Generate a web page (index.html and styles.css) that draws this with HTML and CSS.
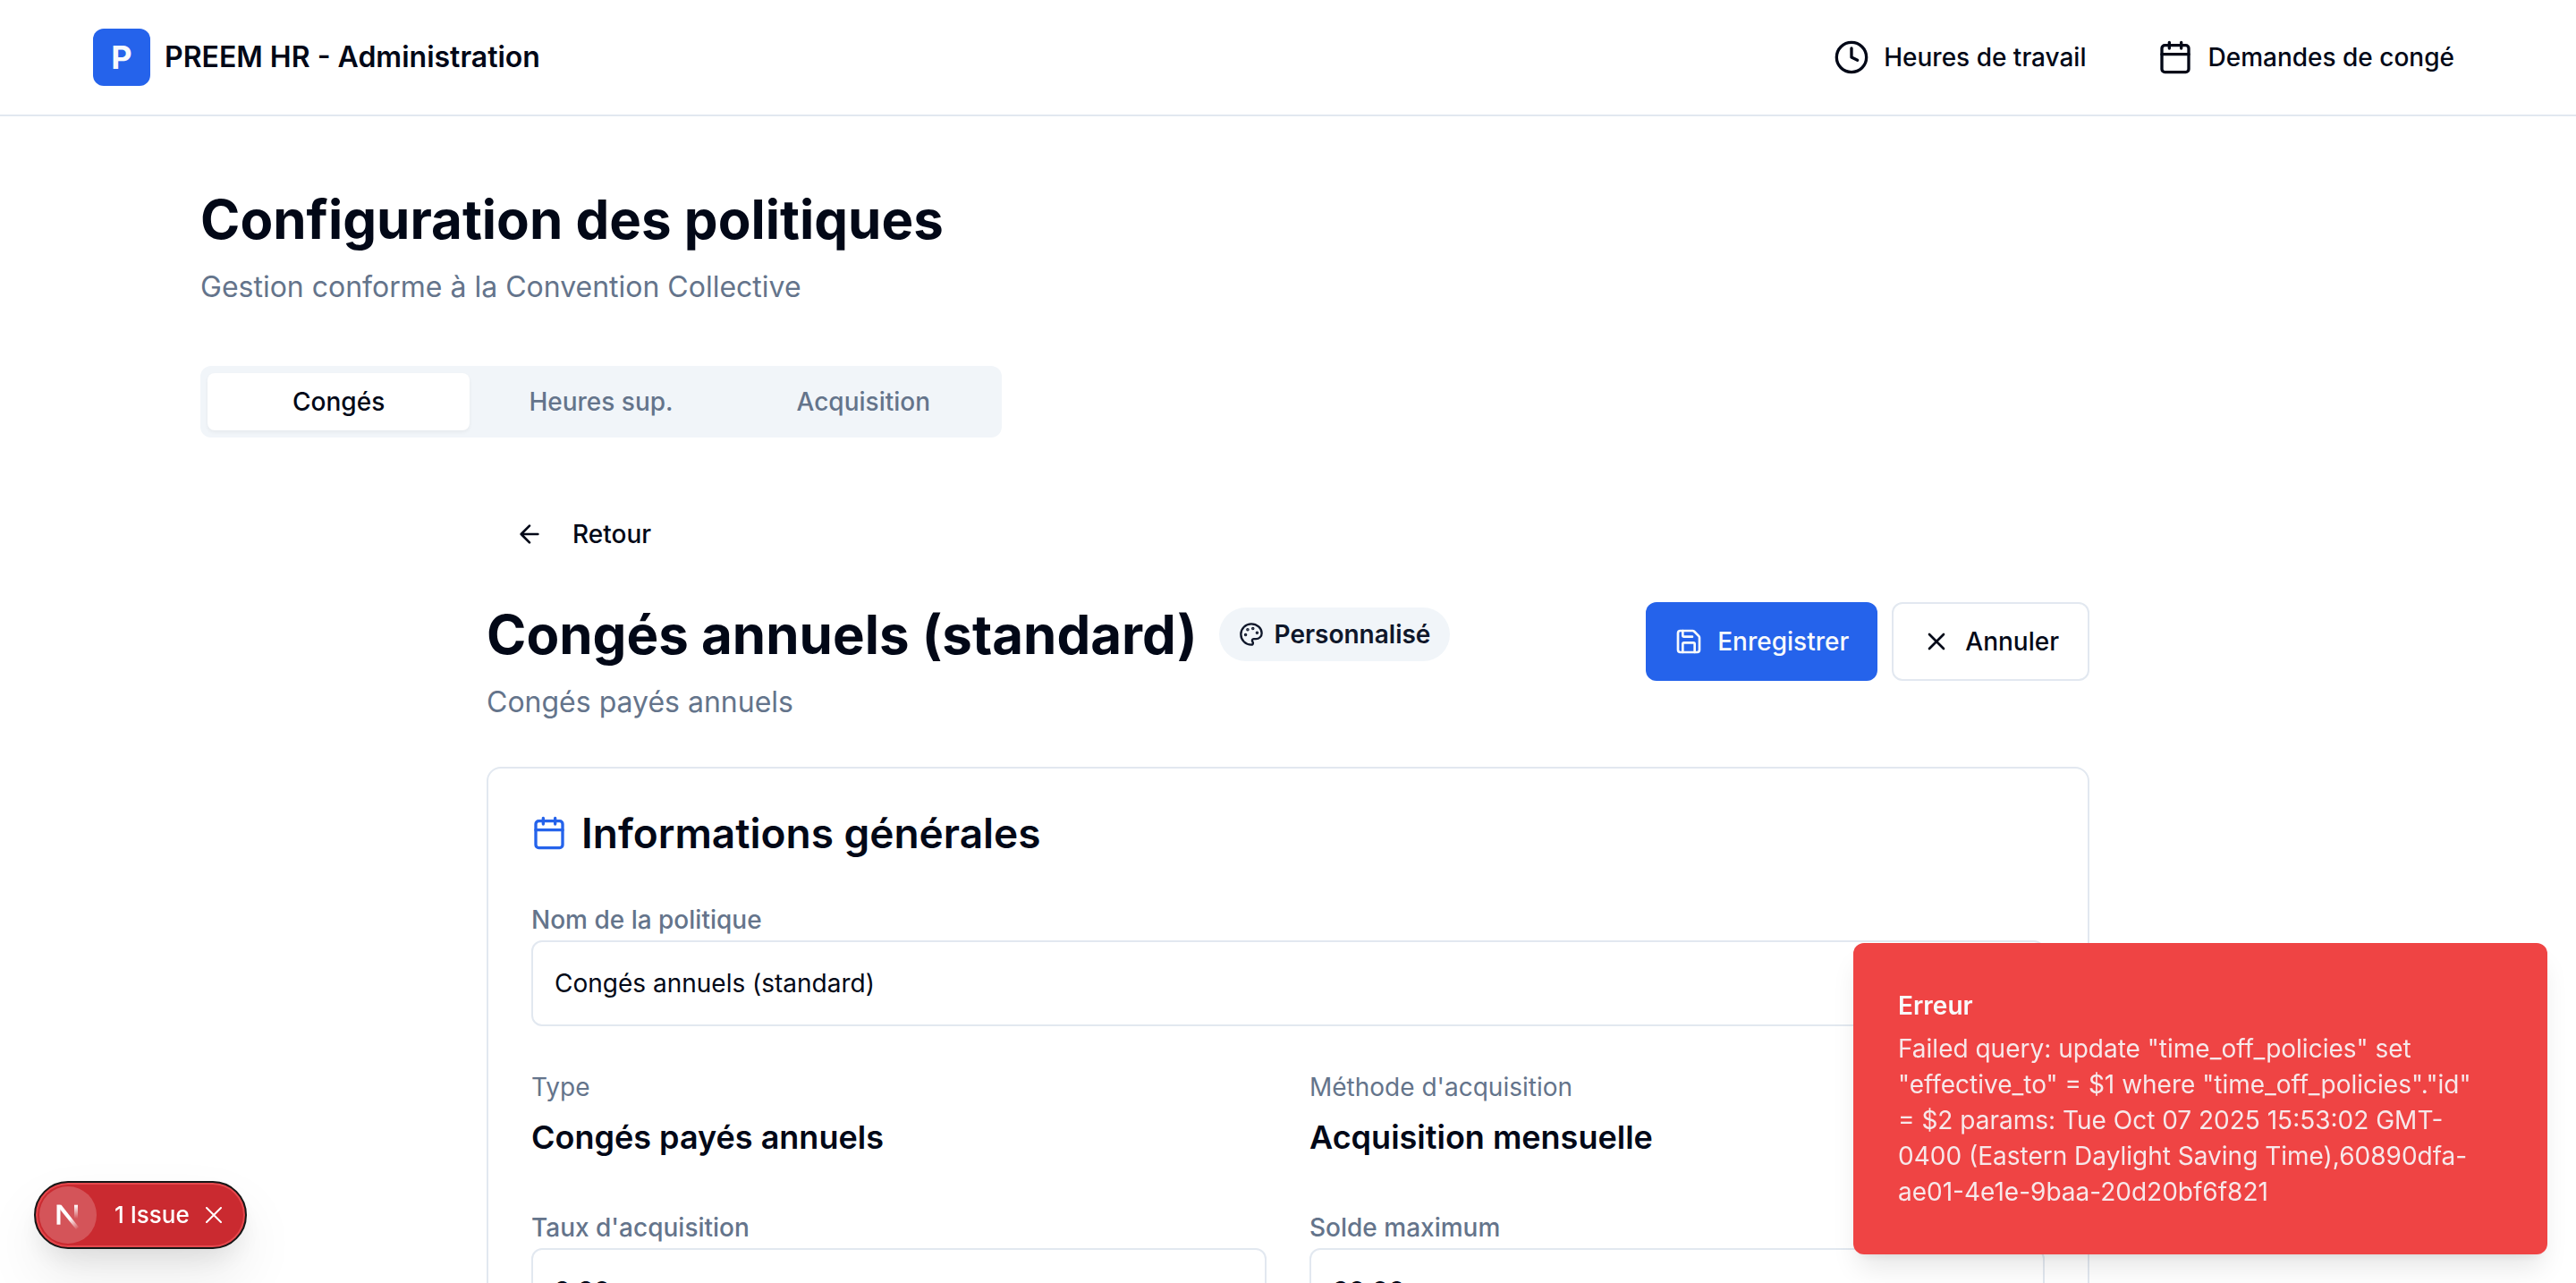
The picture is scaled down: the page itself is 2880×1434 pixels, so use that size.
FILE: index.html
```html
<!DOCTYPE html>
<html lang="fr">
<head>
<meta charset="utf-8">
<title>PREEM HR - Administration</title>
<link rel="stylesheet" href="styles.css">
</head>
<body>
<header class="topbar">
  <a class="brand" href="#"><span class="brand-mark">P</span><span class="brand-name">PREEM HR - Administration</span></a>
  <nav class="topnav">
    <a class="nav-link" href="#">
      <svg class="icon icon-lg" viewBox="0 0 24 24"><circle cx="12" cy="12" r="10"/><path d="M12 6v6l4 2"/></svg>
      Heures de travail
    </a>
    <a class="nav-link" href="#">
      <svg class="icon icon-lg" viewBox="0 0 24 24"><path d="M8 2v4M16 2v4"/><rect width="18" height="18" x="3" y="4" rx="2"/><path d="M3 10h18"/></svg>
      Demandes de congé
    </a>
  </nav>
</header>

<main class="page">
  <div class="heading">
    <h1 class="title">Configuration des politiques</h1>
    <p class="subtitle">Gestion conforme à la Convention Collective</p>
  </div>

  <div class="tabs" role="tablist">
    <button class="tab tab-active" role="tab" aria-selected="true">Congés</button>
    <button class="tab" role="tab" aria-selected="false">Heures sup.</button>
    <button class="tab" role="tab" aria-selected="false">Acquisition</button>
  </div>

  <section class="policy">
    <button class="btn btn-back">
      <svg class="icon" viewBox="0 0 24 24"><path d="m12 19-7-7 7-7M19 12H5"/></svg>
      Retour
    </button>

    <div class="policy-head">
      <div class="heading">
        <div class="title-row">
          <h2 class="title">Congés annuels (standard)</h2>
          <span class="badge">
            <svg class="icon icon-sm" viewBox="0 0 24 24"><path d="M12 2C6.500 2 2 6.500 2 12s4.500 10 10 10c.926 0 1.648-.746 1.648-1.688 0-.437-.18-.835-.437-1.125-.29-.289-.438-.652-.438-1.125a1.640 1.640 0 0 1 1.668-1.668h1.996c3.051 0 5.555-2.503 5.555-5.554C21.965 6.012 17.461 2 12 2z"/><circle class="dot" cx="13.500" cy="6.500" r=".5"/><circle class="dot" cx="17.500" cy="10.500" r=".5"/><circle class="dot" cx="8.500" cy="7.500" r=".5"/><circle class="dot" cx="6.500" cy="12.500" r=".5"/></svg>
            Personnalisé
          </span>
        </div>
        <p class="subtitle">Congés payés annuels</p>
      </div>
      <div class="actions">
        <button class="btn btn-primary">
          <svg class="icon" viewBox="0 0 24 24"><path d="M15.200 3a2 2 0 0 1 1.400.6l3.800 3.800a2 2 0 0 1 .6 1.400V19a2 2 0 0 1-2 2H5a2 2 0 0 1-2-2V5a2 2 0 0 1 2-2z"/><path d="M17 21v-7a1 1 0 0 0-1-1H8a1 1 0 0 0-1 1v7M7 3v4a1 1 0 0 0 1 1h7"/></svg>
          Enregistrer
        </button>
        <button class="btn btn-outline">
          <svg class="icon" viewBox="0 0 24 24"><path d="M18 6 6 18M6 6l12 12"/></svg>
          Annuler
        </button>
      </div>
    </div>

    <div class="card">
      <h3 class="card-title">
        <svg class="icon icon-lg icon-accent" viewBox="0 0 24 24"><path d="M8 2v4M16 2v4"/><rect width="18" height="18" x="3" y="4" rx="2"/><path d="M3 10h18"/></svg>
        Informations générales
      </h3>
      <form class="fields">
        <div class="field field-wide">
          <label class="label" for="policy-name">Nom de la politique</label>
          <input class="input" id="policy-name" type="text" value="Congés annuels (standard)">
        </div>
        <div class="fact">
          <p class="fact-name">Type</p>
          <p class="fact-value">Congés payés annuels</p>
        </div>
        <div class="fact">
          <p class="fact-name">Méthode d'acquisition</p>
          <p class="fact-value">Acquisition mensuelle</p>
        </div>
        <div class="field">
          <label class="label" for="accrual-rate">Taux d'acquisition</label>
          <input class="input input-strong" id="accrual-rate" type="text" value="2.20">
        </div>
        <div class="field">
          <label class="label" for="max-balance">Solde maximum</label>
          <input class="input input-strong" id="max-balance" type="text" value="30.00">
        </div>
      </form>
    </div>
  </section>
</main>

<div class="toast" role="alert">
  <p class="toast-title">Erreur</p>
  <p class="toast-text">Failed query: update "time_off_policies" set "effective_to" = $1 where "time_off_policies"."id" = $2 params: Tue Oct 07 2025 15:53:02 GMT-0400 (Eastern Daylight Saving Time),60890dfa-ae01-4e1e-9baa-20d20bf6f821</p>
</div>

<div class="issues">
  <button class="issues-logo" aria-label="Next.js">
    <svg class="next-mark" viewBox="0 0 40 40">
      <defs>
        <linearGradient id="diagonal" gradientUnits="userSpaceOnUse" x1="22" y1="24" x2="31" y2="36"><stop offset="0" stop-color="#fff"/><stop offset="1" stop-color="#fff" stop-opacity="0"/></linearGradient>
        <linearGradient id="stem" gradientUnits="userSpaceOnUse" x1="29" y1="9" x2="29" y2="24"><stop offset="0" stop-color="#fff"/><stop offset="1" stop-color="#fff" stop-opacity="0"/></linearGradient>
      </defs>
      <path d="M7.500 8.700h4v22h-4z" fill="#fff"/>
      <path d="M7.500 8.700h5L32 33.500 29 36 8.500 10.500z" fill="url(#diagonal)"/>
      <path d="M27 8.700h4V24h-4z" fill="url(#stem)"/>
    </svg>
  </button>
  <button class="issues-label">1 Issue</button>
  <button class="issues-close" aria-label="Close">
    <svg class="close-mark" viewBox="0 0 18 18"><path d="m1 1 16 16M17 1 1 17"/></svg>
  </button>
</div>
</body>
</html>
```
FILE: styles.css
```css
* { box-sizing: border-box; margin: 0; }

:root {
  --ink: #020817;
  --muted: #64748b;
  --line: #e2e8f0;
  --soft: #f1f5f9;
  --accent: #2563eb;
  --pale: #f8fafc;
}

body {
  background: #fff;
  color: var(--ink);
  font: 400 28px/40px Inter, "Liberation Sans", sans-serif;
}

button, input { font: inherit; color: inherit; }
button { border: 0; background: none; padding: 0; cursor: pointer; }
a { color: inherit; text-decoration: none; }

.icon {
  flex: none;
  width: 32px;
  height: 32px;
  fill: none;
  stroke: currentColor;
  stroke-width: 2;
  stroke-linecap: round;
  stroke-linejoin: round;
}
.icon-sm { width: 28px; height: 28px; }
.icon-lg { width: 40px; height: 40px; }
.icon-accent { color: var(--accent); }
.dot { fill: currentColor; }

.topbar {
  display: flex;
  justify-content: space-between;
  align-items: center;
  padding: 32px 104px;
  border-bottom: 2px solid var(--line);
}
.brand { display: flex; align-items: center; gap: 16px; }
.brand-mark {
  display: grid;
  place-items: center;
  width: 64px;
  height: 64px;
  border-radius: 12px;
  background: var(--accent);
  color: var(--pale);
  font-size: 36px;
  font-weight: 700;
}
.brand-name { font-size: 32px; font-weight: 600; }
.topnav { display: flex; gap: 16px; }
.nav-link {
  display: flex;
  align-items: center;
  gap: 16px;
  padding: 0 32px;
  font-weight: 500;
}

.page {
  max-width: 2560px;
  margin: 0 auto;
  padding: 79px 64px;
}
.heading { display: grid; gap: 16px; }
.title { font-size: 60px; line-height: 72px; font-weight: 700; }
.subtitle { font-size: 32px; line-height: 48px; color: var(--muted); }

.tabs {
  display: grid;
  grid-template-columns: repeat(3, 1fr);
  max-width: 896px;
  margin: 64px 0;
  padding: 8px;
  border-radius: 12px;
  background: var(--soft);
}
.tab {
  height: 64px;
  border-radius: 8px;
  color: var(--muted);
  font-weight: 500;
}
.tab-active {
  background: #fff;
  color: var(--ink);
  box-shadow: 0 2px 4px rgb(0 0 0 / 5%);
}

.policy { max-width: 1792px; margin: 0 auto; }
.btn {
  display: inline-flex;
  align-items: center;
  gap: 16px;
  height: 88px;
  padding: 0 32px;
  border-radius: 12px;
  font-weight: 500;
}
.btn-back { display: flex; gap: 32px; }
.btn-primary { background: var(--accent); color: var(--pale); }
.btn-outline { border: 2px solid var(--line); background: #fff; }

.policy-head {
  display: flex;
  justify-content: space-between;
  align-items: flex-start;
  margin: 32px 0 48px;
}
.title-row { display: flex; align-items: center; gap: 24px; }
.badge {
  display: flex;
  align-items: center;
  gap: 12px;
  height: 60px;
  padding: 0 22px;
  border-radius: 30px;
  background: var(--soft);
  color: #0f172a;
  font-weight: 600;
}
.actions { display: flex; gap: 16px; }

.card {
  padding: 48px;
  border: 2px solid var(--line);
  border-radius: 16px;
}
.card-title {
  display: flex;
  align-items: center;
  gap: 16px;
  margin-bottom: 48px;
  font-size: 46px;
  line-height: 48px;
  font-weight: 600;
}
.fields { display: grid; grid-template-columns: 1fr 1fr; gap: 48px; }
.field-wide { grid-column: 1 / -1; }
.label {
  display: block;
  padding-top: 2px;
  line-height: 46px;
  color: var(--muted);
  font-weight: 500;
}
.input {
  display: block;
  width: 100%;
  height: 96px;
  padding: 0 24px;
  border: 2px solid var(--line);
  border-radius: 12px;
  background: #fff;
}
.input-strong { font-weight: 600; }
.fact { display: grid; gap: 8px; }
.fact-name { color: var(--muted); }
.fact-value { font-size: 36px; line-height: 56px; font-weight: 600; }

.toast {
  position: fixed;
  right: 32px;
  bottom: 32px;
  width: 776px;
  padding: 50px 66px 50px 50px;
  border-radius: 12px;
  background: #ef4444;
  color: var(--pale);
  box-shadow: 0 20px 30px -6px rgb(0 0 0 / 10%), 0 8px 12px -8px rgb(0 0 0 / 10%);
}
.toast-title { margin-bottom: 8px; font-weight: 600; }
.toast-text { opacity: .9; }

.issues {
  position: fixed;
  left: 38px;
  bottom: 38px;
  display: flex;
  align-items: center;
  height: 76px;
  padding: 0 26px 0 4px;
  border: 2px solid #171717;
  border-radius: 38px;
  background: #ca2a30;
  color: #fff;
  box-shadow: inset 0 0 0 2px #e5484d, 0 16px 32px -8px rgb(0 0 0 / 10%), 0 32px 64px rgb(0 0 0 / 8%);
}
.issues-logo {
  display: grid;
  place-items: center;
  width: 64px;
  height: 64px;
  border-radius: 50%;
  background: rgb(255 255 255 / 20%);
}
.next-mark { width: 40px; height: 40px; }
.issues-label { margin: 0 18px 0 20px; font-size: 26px; font-weight: 500; }
.issues-close { display: grid; }
.close-mark { width: 18px; height: 18px; fill: none; stroke: currentColor; stroke-width: 2; stroke-linecap: round; }
```
